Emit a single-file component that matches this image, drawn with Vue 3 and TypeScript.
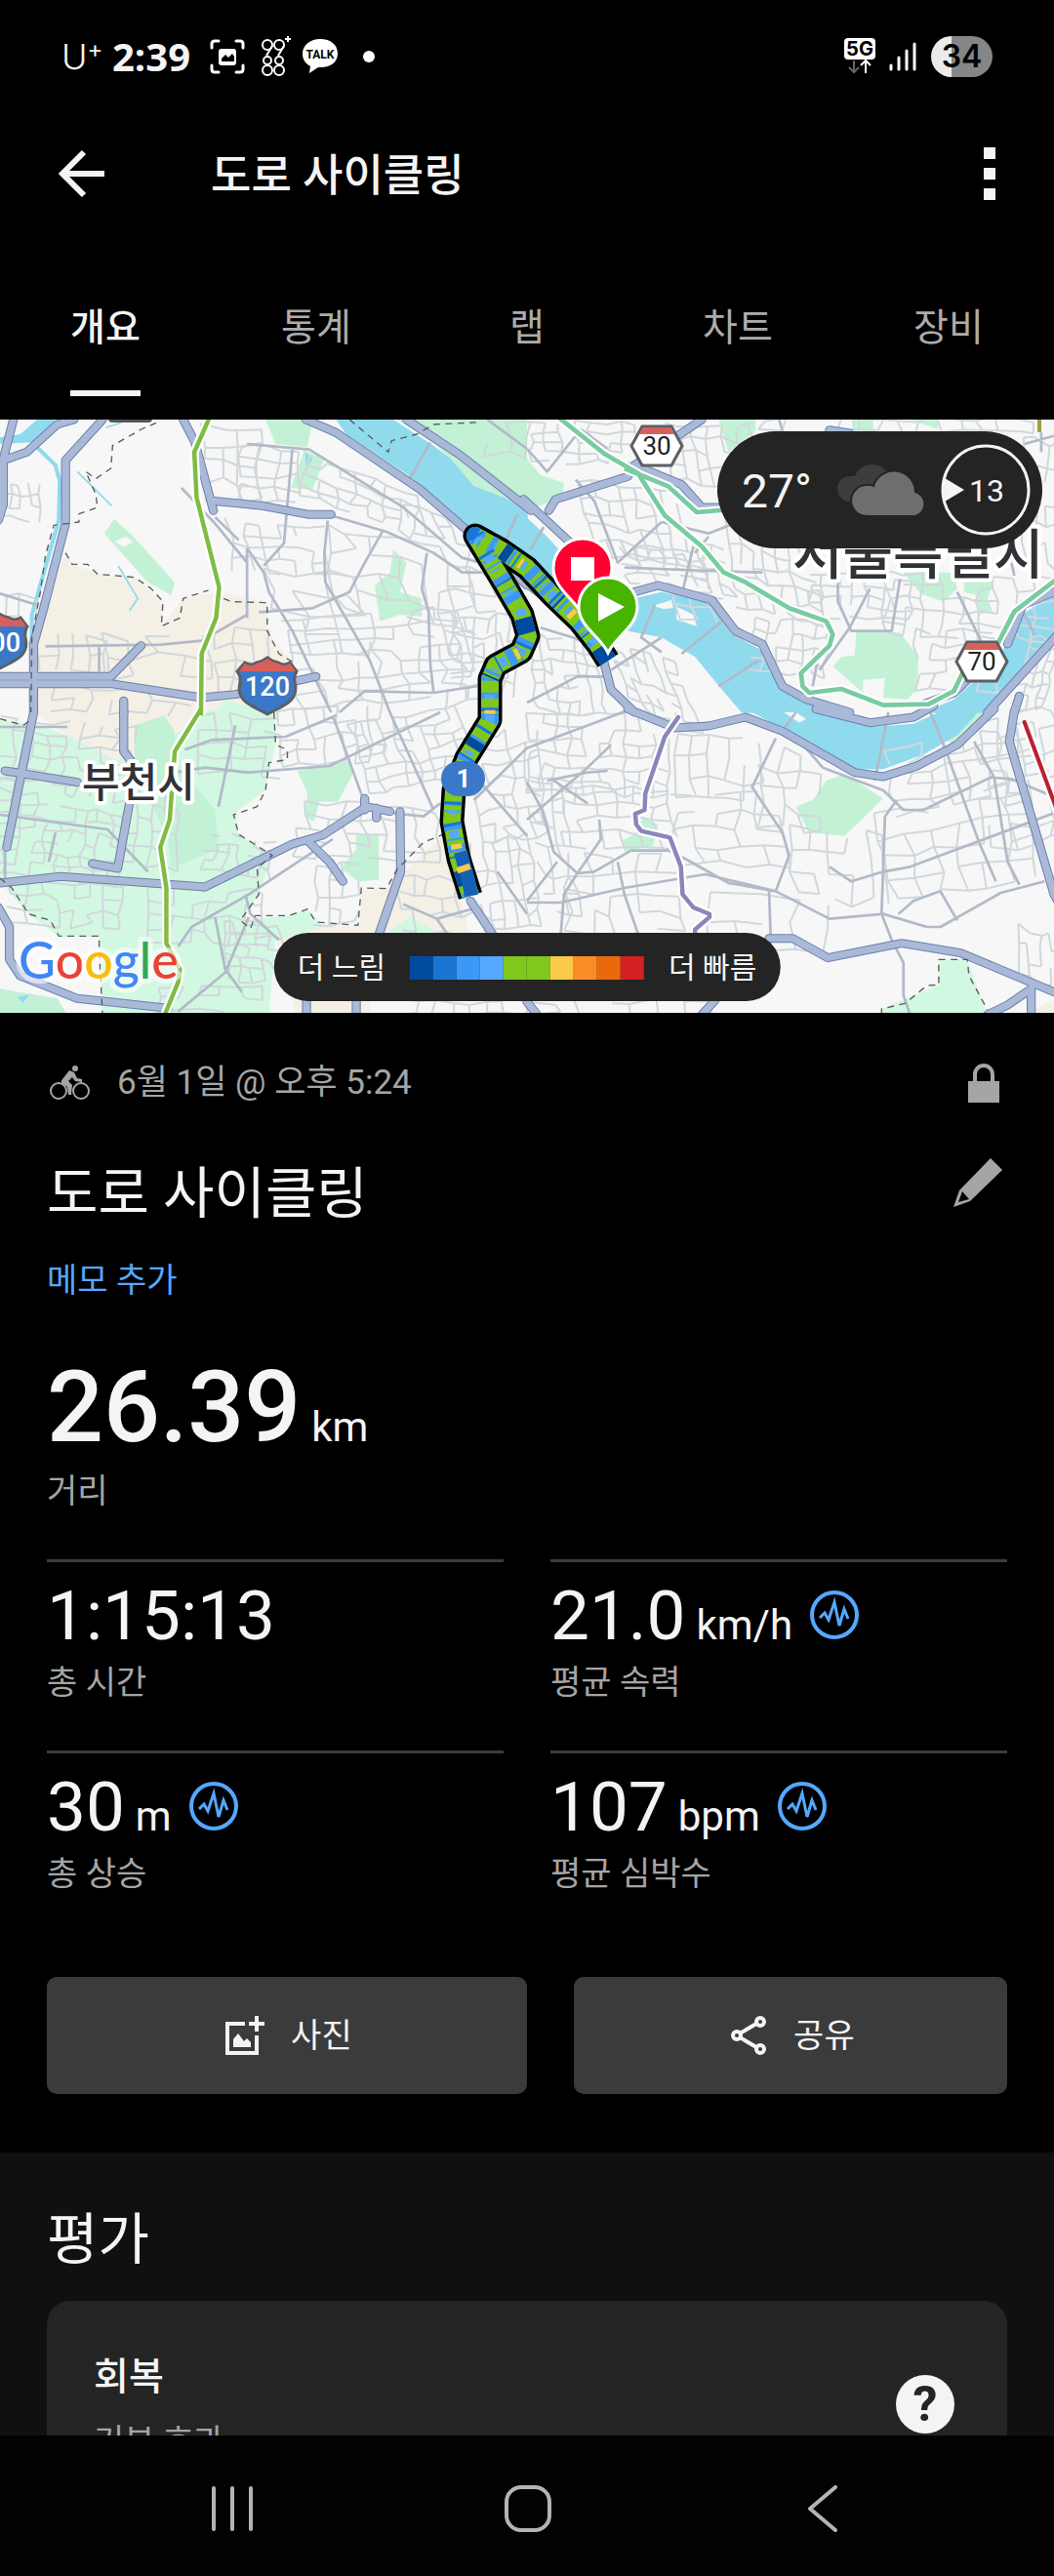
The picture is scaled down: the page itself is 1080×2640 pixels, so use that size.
<script setup lang="ts">
import { ref } from 'vue'

interface Metric {
  value: string
  unit?: string
  label: string
  chart?: boolean
}

interface Layer {
  name: string
  paths: string[]
}

type Patch = [x: number, y: number, w: number, h: number, cols: number, rows: number, skewX: number, skewY: number]

const tabs = ['개요', '통계', '랩', '차트', '장비']
const activeTab = ref('개요')

const metrics: Metric[] = [
  { value: '1:15:13', label: '총 시간' },
  { value: '21.0', unit: 'km/h', label: '평균 속력', chart: true },
  { value: '30', unit: 'm', label: '총 상승', chart: true },
  { value: '107', unit: 'bpm', label: '평균 심박수', chart: true },
]

const speedScale = [
  '#004ba0', '#1976d2', '#3d98f5', '#55a8ff', '#80c81c',
  '#80c81c', '#facb4a', '#fa8c28', '#eb690d', '#d32020',
]

// The map is stored as four tiles, each in its own coordinate space.
const tiles = [
  'translate(0 -10) scale(.3444 .3333)',
  'translate(540 -10) scale(.3444 .3333)',
  'translate(0 300) scale(.3444 .3333)',
  'translate(540 300) scale(.3444 .3333)',
]

let seed = 17
function random(): number {
  seed = (seed * 16807) % 2147483647
  return seed / 2147483647
}

// Builds an irregular street mesh inside a slanted patch.
function streets([x, y, w, h, cols, rows, skewX, skewY]: Patch): string {
  const nodes: number[][][] = []
  for (let r = 0; r <= rows; r++) {
    nodes.push([])
    for (let c = 0; c <= cols; c++) {
      const u = c / cols
      const v = r / rows
      nodes[r].push([
        Math.round(x + u * w + v * skewX + (random() - 0.5) * (w / cols) * 0.5),
        Math.round(y + v * h + u * skewY + (random() - 0.5) * (h / rows) * 0.5),
      ])
    }
  }
  let d = ''
  for (let r = 0; r <= rows; r++) {
    for (let c = 0; c <= cols; c++) {
      const [px, py] = nodes[r][c]
      if (c < cols && random() < 0.74) d += `M${px} ${py}L${nodes[r][c + 1].join(' ')}`
      if (r < rows && random() < 0.74) d += `M${px} ${py}L${nodes[r + 1][c].join(' ')}`
    }
  }
  return d
}

const patches: Patch[][] = [
  [
    [610, 50, 160, 220, 3, 4, 0, 10], [720, 110, 160, 170, 3, 4, 0, 10], [920, 140, 330, 120, 7, 4, -20, 130],
    [680, 340, 280, 150, 6, 4, 20, 20], [970, 360, 420, 260, 6, 4, 40, 60], [780, 500, 250, 250, 3, 4, 80, 10],
    [840, 640, 500, 270, 8, 7, 60, -30], [1280, 480, 180, 330, 3, 5, 60, 20], [1350, 650, 200, 260, 6, 6, -20, -30],
    [110, 690, 200, 110, 4, 2, 10, 10], [150, 850, 420, 70, 7, 2, 0, 20], [300, 700, 300, 120, 4, 2, 20, 0],
    [640, 670, 160, 220, 3, 4, 0, 0], [0, 220, 120, 110, 4, 3, 0, 10], [1200, 280, 180, 90, 4, 2, 30, 60],
    [1450, 40, 118, 100, 2, 2, 0, 0], [10, 580, 90, 60, 2, 1, 0, 0],
  ],
  [
    [0, 40, 320, 120, 7, 4, 20, 0], [150, 220, 280, 230, 7, 5, 60, 30], [280, 420, 240, 110, 6, 4, 20, 20],
    [400, 40, 260, 180, 6, 4, 30, 10], [580, 320, 260, 280, 7, 6, 40, 60], [420, 400, 160, 150, 4, 4, 40, 30],
    [700, 30, 820, 40, 14, 1, 0, 0], [840, 500, 300, 130, 7, 4, 0, 20], [1070, 500, 490, 190, 9, 5, 0, 20],
    [1160, 680, 230, 180, 5, 4, 0, 0], [680, 640, 220, 160, 6, 4, -20, 20], [0, 690, 200, 230, 6, 6, 30, 20],
    [240, 700, 200, 220, 6, 6, 80, 80], [430, 560, 150, 80, 3, 2, 30, 20], [1500, 700, 90, 220, 4, 6, -60, 0],
    [1480, 90, 100, 380, 3, 6, 0, 20],
  ],
  [
    [0, 20, 400, 180, 8, 5, -20, 30], [0, 200, 380, 290, 10, 8, -30, 40], [30, 520, 330, 130, 7, 3, 0, 10],
    [380, 220, 160, 240, 4, 5, -20, 20], [620, 370, 200, 110, 6, 4, -20, 30], [450, 540, 340, 170, 6, 4, 0, 10],
    [660, 640, 170, 180, 5, 5, 20, 20], [600, 0, 230, 180, 5, 4, 0, 20], [830, 0, 300, 170, 7, 4, 20, -30],
    [1040, 40, 320, 210, 8, 6, 60, -60], [860, 270, 430, 170, 8, 4, 20, 30], [1180, 500, 220, 160, 5, 3, 10, 20],
    [1390, 80, 200, 320, 5, 7, 40, -30], [1400, 400, 170, 280, 5, 6, 40, -20], [940, 470, 120, 180, 3, 4, 0, 0],
    [480, 840, 300, 80, 5, 2, 0, 0], [1180, 890, 380, 40, 7, 1, 0, 0],
  ],
  [
    [0, 0, 420, 240, 10, 6, 0, 20], [0, 200, 100, 400, 3, 8, 60, 20], [90, 230, 330, 180, 6, 4, 30, 10],
    [440, 70, 260, 190, 5, 3, 0, 20], [430, 240, 320, 220, 5, 4, 20, 20], [110, 440, 350, 230, 5, 4, 10, 10],
    [700, 110, 170, 240, 3, 4, 0, 20], [780, 360, 280, 210, 5, 3, 20, 20], [1060, 120, 440, 200, 8, 5, 50, -90],
    [1050, 320, 430, 260, 6, 4, 40, -80], [1330, 30, 240, 400, 4, 6, 60, -50], [540, 560, 350, 160, 4, 2, 0, 20],
    [1460, 660, 130, 150, 4, 3, 0, 30], [0, 890, 560, 40, 7, 1, 0, 0],
  ],
]

const majorRoads = [
  'M40 30L10 150V290L-5 340M10 155L80 130 170 45 220 30M305 30L195 155V350L130 610 100 720V930M545 30L580 100 635 310M630 280L780 295 920 322H985M910 30L1000 70 1250 245 1400 380 1568 540M1210 30L1370 140 1580 310M0 820H330L420 725M0 842H330L600 885 700 875 940 820M368 895V935',
  'M-10 275L120 400 200 480M520 30L320 170 300 205 85 275 65 310M320 170L460 230 520 300H580M320 560L390 540 550 585 620 680 700 720 760 850 830 890 960 930M0 535L210 700 250 860 320 930M1568 560L1475 600 1430 720M1580 690L1370 930M900 62L960 72M1465 880L1450 930M1400 740L1270 870 1180 905',
  'M100 0L20 415M15 180L230 215M368 -5V120L390 150 385 280 350 480 275 465M0 525L180 505 610 537 870 405 960 378 1090 290 1160 305M1085 265V300M1120 325V295M920 400L980 460 1020 520M1190 305L1192 490 1125 690M-5 600L28 660V760L60 810 230 880 500 910M1400 580L1470 690M912 885V930M1060 885V930',
  'M300 -10L440 48 540 42 650 15 760 58 975 185 1060 198 1160 165 1280 100 1390 -10M860 -10L1020 32 1150 15 1210 -20M1450 -5L1435 90 1568 560 1590 600M720 695H790L895 755 1115 710 1290 740 1580 865M1500 850L1430 900 1370 930M1500 850V930M0 890L30 930M560 885L520 930',
]

const borders = [
  'M465 40L420 60 335 110 330 180 285 212 255 190 285 260 290 300 235 320V345L160 355 135 450 120 560 95 700 92 930M195 440L215 475H260L290 505 400 515 450 550 485 590 480 665 535 640 545 580 620 555M665 580L690 590 795 593V680L830 750 870 775M1040 30L1155 130 1165 95 1240 75 1290 45 1430 38',
  '',
  'M815 0L820 100 855 115V145L800 155 790 240 765 290 695 315 710 375 810 440 765 480 770 560 715 640 745 665 760 625H860L915 605 940 645 1065 655 1075 540 1150 542 1180 485 1260 400 1320 375M0 20L70 40 95 20M0 510L35 540 85 620 150 640 175 688H295V730L305 930',
  'M1055 930V912L1125 895 1190 840 1225 838V760H1310L1315 810 1370 915',
]

const lineWest = [
  'M625 20L578 130 585 270 652 545 643 640 600 750 598 940',
  '',
  'M598 -10L520 120 505 330 477 415 495 540V710L535 790 530 830 490 930',
  '',
]

const lineNorth = [
  '',
  'M90 20L230 135 330 195 410 325 520 420 585 500 650 530 780 610 890 650 910 690 900 725 815 810 820 850 840 870 935 858 1060 908 1195 905 1270 865 1300 800 1400 720 1450 620 1575 522M290 180L420 235 505 315 620 305',
  '',
  '',
]

const lineSouth = ['', '', '', 'M450 15L410 75 352 250 350 300 322 312 325 345 340 365 425 385 458 475 463 560 495 600 543 620V630L500 668V720']
const lineEast = ['', '', '', 'M1480 30L1580 310']

const layers: Layer[] = [
  {
    name: 'tan',
    paths: [
      'M195 440L215 475 290 505 400 515 485 590 480 665 545 580 650 560 795 593V680L870 775 830 935H100V700Z',
      '',
      'M100 0H600L400 150 330 140 200 70ZM1075 545L1150 542 1320 375 1400 690H1070ZM820 690L965 655 1100 660V930H880Z',
      'M1470 930L1568 885V930Z',
    ],
  },
  {
    name: 'mint',
    paths: [
      'M640 935L670 890 800 930V935Z',
      '',
      'M0 25L100 35 200 70 330 140 400 150 620 -5H815L820 100 790 240 700 310 710 375 810 440 770 560 715 640 860 625 915 605 965 660 820 700 800 930H305L295 690H175L85 620 0 520ZM1150 680L1220 630 1330 690Z',
      'M1055 930V912L1225 838V760H1310L1370 930Z',
    ],
  },
  {
    name: 'park',
    paths: [
      'M340 335L395 388 520 530 510 570 440 530 310 380ZM790 30H930L915 115 820 105ZM905 125L965 150 930 245 865 240ZM1170 430L1210 470 1190 560 1255 580V635L1190 630 1130 650 1115 540 1160 500ZM1180 30L1300 110 1410 235 1568 310V30Z',
      'M0 150L40 200 110 225 105 270 0 310ZM570 30H680V66L600 130ZM965 30H1030V66H970ZM1140 30H1222V60ZM980 680L1110 685 1165 760 1160 860 1130 890 1060 885 1065 825 1000 830V870L910 790 935 760 975 755ZM1120 500H1270L1280 550 1240 590 1170 565ZM1300 530L1390 525 1370 580 1385 620 1340 630V570L1300 560Z',
      'M400 40L490 10 520 60V150L640 300 650 420 510 480 500 400 400 150ZM885 180L1040 150 1050 190 1005 275H950L935 335 905 320 915 250ZM1060 375H1127V515L1065 520 1015 480 1060 420ZM0 850L170 880 200 930H0Z',
      'M890 210L945 190 1060 265 945 380 840 370 800 290 850 270ZM345 325L390 345 375 410 290 430 280 395 320 375ZM1240 75L1350 0H1390L1270 105Z',
    ],
  },
  {
    name: 'water',
    paths: [
      'M1000 30H1170L1290 110 1340 150 1410 235 1500 270 1570 310V540L1400 375 1220 205 1030 75ZM908 130L930 150 912 185ZM0 85L60 75 110 30H165L100 100 0 105Z',
      'M-2 330L60 390 130 470 320 580 400 560 540 590 610 690 700 740 750 860 900 932H640L580 860 500 760 400 700 300 680 170 690 -2 510ZM1568 570L1470 630 1400 770 1270 890 1180 932H1365L1568 700Z',
      'M52 875L88 868 68 893Z',
      'M665 -2L760 50 980 175H1060L1180 130 1280 70 1345 -2H1230L1150 35 1020 45 880 -2Z',
    ],
  },
  { name: 'islet', paths: ['M340 405L375 390 395 405 370 422Z', 'M375 602L430 585 435 610 405 612ZM445 605L495 630 505 665 445 645Z', '', 'M765 0H800L830 20 810 32Z'] },
  { name: 'creek', paths: ['M110 115L165 170 178 220 175 340 150 430 95 630 92 900', '', '', ''] },
  { name: 'brook', paths: ['M230 190L332 295M352 480L410 580 385 618M315 55L360 40', '', '', ''] },
  { name: 'minor', paths: patches.map((list) => list.map(streets).join('')) },
  {
    name: 'mid',
    paths: [
      'M0 565L110 600M735 105L920 122 1200 300 1375 455 1430 470M640 330L710 400M540 240L640 350 735 470M735 425V640M735 425L785 500 800 560 870 680 985 930M985 325L1150 375 1290 440 1375 500H1435M975 340L965 440 968 530 1100 770 1160 930M870 120L855 290 845 410 785 480M1140 370L1080 480 1040 560 930 610 770 622M1270 440L1255 550 1275 620 1280 780 1290 870M1010 930L1085 865 1290 870 1420 850M135 727L480 722 600 710 735 630M295 730V805M1280 100L1220 210M1540 320L1500 410M1450 30L1568 120',
      'M0 120L60 190 160 60M145 215L200 280 270 470 400 345M160 60L240 120M400 345L540 380 640 340M495 420L460 570M540 390L500 440M290 485L540 495 590 490M540 495L700 500M750 30L760 66M925 430V590L965 680H1085L1110 520M1430 420L1450 510M1280 560L1350 710M1020 550L960 670 870 800M1568 80L1480 105M1530 70V130M570 850L690 770M580 650L460 750M1470 610L1510 690M380 600L340 700 400 745M40 670L200 720M0 900L150 820H240M250 800L400 700M870 740L850 850M50 360L10 430',
      'M0 315L320 360 440 490M0 45H200M550 115L630 85 850 75 1000 10M490 190L610 170 740 185 980 165 1050 130 1310 0M990 10L1080 265M1160 0L1290 300M530 720L570 660 740 560 930 430 990 390M730 560L745 620 830 700M640 630L670 790 720 860M530 920L670 800 740 630M1200 590L1300 635 1330 680M1300 635L1420 600M1170 310L1260 320 1310 280M1410 270L1568 110M1400 180L1568 380M1480 490L1568 620M15 410V510M700 40L650 290M165 370L145 460',
      'M0 110L310 -10M0 215L45 300 80 430 150 495 200 490 310 425H420L470 450 600 525 740 550 900 635 1060 620 1190 660H1230L1410 555 1540 520M150 495L110 560 100 690M0 585H100L290 540 530 498 740 550M270 460L290 560 330 680M740 550L780 440 760 370 670 230 740 80M720 545L725 690M830 110L880 170 1060 240 1120 300H1180L1380 200 1440 205 1568 260M1100 270L1065 320 1055 620 1085 700 1120 770V870L1140 930M1060 490L1140 475 1568 310M1330 90L1390 200 1430 460 1465 530M1240 100L1345 400 1395 520M900 475L965 520 1060 490M1105 620L1150 580 1230 550 1280 640M1075 0L1035 210M800 0L765 50M1200 0L1240 100M150 495L220 390 215 330M60 210L180 185 240 180M0 330L180 170 250 100M80 210L180 280M0 580L90 460',
    ],
  },
  { name: 'major-edge', paths: majorRoads },
  { name: 'major', paths: majorRoads },
  { name: 'border', paths: borders },
  { name: 'rail-edge', paths: lineWest.map((d, i) => d + lineNorth[i] + lineSouth[i] + lineEast[i]) },
  { name: 'rail-west', paths: lineWest },
  { name: 'rail-north', paths: lineNorth },
  { name: 'rail-south', paths: lineSouth },
  { name: 'rail-east', paths: lineEast },
]

const ride = 'M623 247L612 230 594 207 566 180 540 152 514 134 487 119 516 167 535 200 541 222 534 238 508 252 502 266V308L478 347 465 380 463 412 470 450 482 488'
</script>

<template>
  <div class="screen">
    <header class="status">
      <div class="status-side">
        <span class="carrier">U<sup>+</sup></span>
        <span class="clock">2:39</span>
        <svg class="scan" width="36" height="36" viewBox="0 0 36 36" aria-hidden="true">
          <path d="M2 9V5Q2 2 5 2H9M27 2h4q3 0 3 3v4M34 27v4q0 3-3 3h-4M9 34H5q-3 0-3-3v-4" fill="none" stroke="#fff" stroke-width="3" stroke-linecap="round" />
          <rect x="9" y="10" width="18" height="17" rx="3" fill="#fff" />
          <path d="M12 23v-3l4-4 3 3 4-4 2 3v5Z" fill="#000" />
        </svg>
        <svg class="digits-icon" width="30" height="42" viewBox="0 0 30 42" aria-hidden="true">
          <g fill="none" stroke="#fff" stroke-width="2">
            <circle cx="6" cy="9" r="5" /><circle cx="18" cy="9" r="5" />
            <path d="M11 10L5 20M23 10l-6 10" />
            <circle cx="6" cy="25" r="4" /><circle cx="18" cy="25" r="4" />
            <circle cx="6" cy="35" r="5" /><circle cx="18" cy="35" r="5" />
            <path d="M27 0v6M24 3h6" />
          </g>
        </svg>
        <svg class="talk" width="38" height="36" viewBox="0 0 38 36" aria-hidden="true">
          <path d="M19 0C8 0 1 7 1 15c0 6 3 10 8 13L8 35l9-6c12 1 20-5 20-14S30 0 19 0Z" fill="#fff" />
          <text x="19" y="20" text-anchor="middle" class="talk-text">TALK</text>
        </svg>
        <span class="dot"></span>
      </div>
      <div class="status-side right">
        <svg width="34" height="38" viewBox="0 0 34 38" aria-hidden="true">
          <rect x="1" y="0" width="32" height="22" rx="4" fill="#fff" />
          <text x="17" y="18" text-anchor="middle" class="network">5G</text>
          <path d="M11 23v12M6 30l5 5 5-5" fill="none" stroke="#666" stroke-width="2" />
          <path d="M23 36V24M18 28l5-5 5 5" fill="none" stroke="#fff" stroke-width="2" />
        </svg>
        <svg width="28" height="30" viewBox="0 0 28 30" aria-hidden="true">
          <path d="M2 24v4M10 16v12M18 9v19M26 2v26" stroke="#fff" stroke-width="3" stroke-linecap="round" />
        </svg>
        <span class="battery">34</span>
      </div>
    </header>

    <div class="topbar">
      <button class="icon-button" type="button" aria-label="뒤로">
        <svg width="48" height="50" viewBox="0 0 48 50">
          <path d="M47 25H4M26 3L4 25l22 22" fill="none" stroke="#f4f4f4" stroke-width="6" />
        </svg>
      </button>
      <h1>도로 사이클링</h1>
      <button class="icon-button" type="button" aria-label="더보기">
        <svg width="12" height="54" viewBox="0 0 12 54" fill="#f4f4f4">
          <path d="M0 0h12v12H0zM0 21h12v12H0zM0 42h12v12H0z" />
        </svg>
      </button>
    </div>

    <nav class="tabs">
      <button
        v-for="tab in tabs"
        :key="tab"
        type="button"
        :class="['tab', { active: tab === activeTab }]"
        @click="activeTab = tab"
      >
        <span>{{ tab }}</span>
      </button>
    </nav>

    <main class="content">
      <section class="map">
        <svg class="map-canvas" viewBox="0 0 1080 608">
          <rect width="1080" height="608" fill="#f7f7f7" />
          <g v-for="layer in layers" :key="layer.name" :class="['layer', layer.name]">
            <path v-for="(d, i) in layer.paths" :key="i" :d="d" :transform="tiles[i]" />
          </g>
          <path d="M1065 0V13" stroke="#a09c46" stroke-width="4" />
          <rect x="111" y="-8" width="45" height="11" rx="4" fill="#555" />

          <g class="place">
            <text x="84" y="387" class="city">부천시</text>
            <text x="812" y="158" class="capital">서울특별시</text>
          </g>

          <g class="ride">
            <path :d="ride" stroke="#000" stroke-width="25" />
            <path :d="ride" stroke="#80c81c" stroke-width="18" />
            <path :d="ride" stroke="#3d98f5" stroke-width="18" stroke-dasharray="3 5 2 12 6 9 2 4 8 21" />
            <path :d="ride" stroke="#55a8ff" stroke-width="10" stroke-dasharray="4 17 7 9 2 25" />
            <path :d="ride" stroke="#1976d2" stroke-width="18" stroke-dasharray="3 31 2 47 3 19" />
            <path :d="ride" stroke="#004ba0" stroke-width="18" stroke-dasharray="16 62 2 68 9 130" />
            <path :d="ride" stroke="#facb4a" stroke-width="11" stroke-dasharray="0 58 5 70 3 190 4 70 4 85" />
            <path d="M472 443l4 15 4 14 3 16" stroke="#1460b4" stroke-width="14" />
            <path d="M474 457l2 6" stroke="#facb4a" stroke-width="14" />
          </g>

          <g stroke="#5d5f62" stroke-width="3">
            <g id="shield">
              <path d="M251 249q7 4 12 0q6-1 11-5q5 4 11 5q6 4 12 0l7 9q-3 5-2 11c5 20-12 24-28 33c-16-9-33-13-28-33q1-6-3-11Z" fill="#3b78c8" />
              <path d="M251 250q7 4 12 0q6-1 11-5q5 4 11 5q6 4 12 0l6 8H245Z" fill="#d85f5c" stroke="none" />
            </g>
            <use href="#shield" x="-276" y="-46" />
            <g id="hex">
              <path d="M658 7h30l11 20-11 20h-30l-11-20Z" fill="#fff" />
              <path d="M659 8h28l4 7h-36Z" fill="#d85f5c" stroke="none" />
            </g>
            <use href="#hex" x="333" y="221" />
          </g>
          <g class="route-numbers" text-anchor="middle">
            <text x="274" y="283">120</text>
            <text x="-2" y="238">100</text>
            <text x="673" y="36" class="dark">30</text>
            <text x="1006" y="257" class="dark">70</text>
          </g>

          <rect x="452" y="350" width="45" height="36" rx="18" fill="#3b78c8" />
          <text x="475" y="377" text-anchor="middle" class="lap">1</text>

          <g stroke="#fff" stroke-width="3">
            <path d="M597 201C590 184 567 174 567 152a30 30 0 0 1 60 0C627 174 604 184 597 201Z" fill="#ff0031" />
            <path d="M585 141h24v24h-24Z" fill="#fff" stroke="none" />
            <path d="M623 239C615 222 593 212 593 192a30 30 0 0 1 60 0C653 212 631 222 623 239Z" fill="#48b400" />
            <path d="M613 178l27 14-27 15Z" fill="#fff" stroke="none" />
          </g>

          <text x="19" y="573" class="brand">
            <tspan fill="#4285f4">G</tspan><tspan fill="#ea4335">o</tspan><tspan fill="#fbbc05">o</tspan><tspan fill="#4285f4">g</tspan><tspan fill="#34a853">l</tspan><tspan fill="#ea4335">e</tspan>
          </text>
        </svg>

        <div class="weather">
          <span class="temperature">27°</span>
          <svg width="94" height="52" viewBox="0 0 94 52" aria-hidden="true">
            <path d="M14 38a13 13 0 0 1 2-26h4a19 19 0 0 1 36 2v24Z" fill="#3d3d3d" />
            <path d="M32 53a16 16 0 0 1 0-32q4-1 7 1a22 22 0 0 1 43 6a13 13 0 0 1 0 25Z" fill="#6e6e6e" stroke="#242424" stroke-width="2" />
          </svg>
          <span class="wind">
            <svg width="92" height="94" viewBox="0 0 92 94" aria-hidden="true">
              <ellipse cx="46" cy="47" rx="44" ry="45" fill="none" stroke="#f4f4f4" stroke-width="3" />
              <path d="M4 35l20 12L4 59q-2-12 0-24Z" fill="#f4f4f4" />
              <text x="47" y="59" text-anchor="middle" class="wind-speed">13</text>
            </svg>
          </span>
        </div>

        <div class="legend">
          <span>더 느림</span>
          <span class="scale">
            <i v-for="(color, i) in speedScale" :key="i" :style="{ background: color }"></i>
          </span>
          <span>더 빠름</span>
        </div>
      </section>

      <section class="summary">
        <div class="date-row">
          <svg width="42" height="36" viewBox="0 0 42 36" aria-hidden="true">
            <g fill="none" stroke="#a5a5a5" stroke-width="2">
              <circle cx="9" cy="26" r="8" /><circle cx="32" cy="26" r="8" />
            </g>
            <circle cx="26" cy="3" r="3" fill="#a5a5a5" />
            <path d="M20 5l5 2 3 6 5 1v3l-7-1-3-4-4 4 4 4-1 10h-3l-1-8-6-4q-1-2 1-4Z" fill="#a5a5a5" />
          </svg>
          <time>6월 1일 @ 오후 5:24</time>
          <svg class="lock" width="32" height="40" viewBox="0 0 32 40" aria-hidden="true">
            <path d="M0 18h32v22H0Z" fill="#a5a5a5" />
            <path d="M7 19V11a9 9 0 0 1 18 0v8" fill="none" stroke="#a5a5a5" stroke-width="4" />
          </svg>
        </div>

        <div class="title-row">
          <h2>도로 사이클링</h2>
          <button class="icon-button edit" type="button" aria-label="편집">
            <svg width="50" height="50" viewBox="0 0 50 50">
              <path d="M38 0L50 12 17 44 0 50 6 33Z" fill="#a5a5a5" />
              <path d="M9 34l7 8-11 3Z" fill="#000" />
            </svg>
          </button>
        </div>
        <a class="memo" href="#">메모 추가</a>

        <div class="distance">
          <p><strong>26.39</strong><span class="unit">km</span></p>
          <span class="label">거리</span>
        </div>

        <div class="metrics">
          <div v-for="metric in metrics" :key="metric.label" class="metric">
            <div class="metric-value">
              <span class="figure">{{ metric.value }}<span v-if="metric.unit" class="unit">{{ metric.unit }}</span></span>
              <svg v-if="metric.chart" width="50" height="50" viewBox="0 0 50 50" aria-hidden="true">
                <circle cx="25" cy="25" r="23" fill="none" stroke="#55a8ff" stroke-width="4" />
                <path d="M10 28l5-5 4 7 6-18 5 24 5-17 4 10" fill="none" stroke="#55a8ff" stroke-width="3" />
              </svg>
            </div>
            <span class="label">{{ metric.label }}</span>
          </div>
        </div>

        <div class="actions">
          <button class="action photo" type="button">
            <svg width="40" height="40" viewBox="0 0 40 40" aria-hidden="true">
              <path d="M20 8H2v30h30V20" fill="none" stroke="#f4f4f4" stroke-width="4" />
              <path d="M32 0v16M24 8h16" stroke="#f4f4f4" stroke-width="4" />
              <path d="M8 32v-8l5-6 6 8 3-3 4 4v5Z" fill="#f4f4f4" />
            </svg>
            사진
          </button>
          <button class="action share" type="button">
            <svg width="38" height="40" viewBox="0 0 38 40" aria-hidden="true">
              <g fill="none" stroke="#f4f4f4" stroke-width="4">
                <circle cx="7" cy="20" r="4" /><circle cx="31" cy="6" r="4" /><circle cx="31" cy="34" r="4" />
                <path d="M10 18L27 8M10 22l17 10" />
              </g>
            </svg>
            공유
          </button>
        </div>
      </section>

      <section class="evaluation">
        <h2>평가</h2>
        <article class="card">
          <div>
            <h3>회복</h3>
            <p class="benefit">기본 효과</p>
          </div>
          <button class="help" type="button" aria-label="도움말">?</button>
        </article>
      </section>
    </main>

    <footer class="system-nav">
      <button type="button" aria-label="최근 앱">
        <svg width="44" height="48" viewBox="0 0 44 48">
          <path d="M3 3v42M22 3v42M41 3v42" stroke="#b4b4b4" stroke-width="4" stroke-linecap="round" />
        </svg>
      </button>
      <button type="button" aria-label="홈">
        <svg width="48" height="48" viewBox="0 0 48 48">
          <rect x="2" y="2" width="44" height="44" rx="15" fill="none" stroke="#b4b4b4" stroke-width="4" />
        </svg>
      </button>
      <button type="button" aria-label="뒤로 가기">
        <svg width="32" height="48" viewBox="0 0 32 48">
          <path d="M29 2L3 24l26 22" fill="none" stroke="#b4b4b4" stroke-width="4" stroke-linecap="round" stroke-linejoin="round" />
        </svg>
      </button>
    </footer>
  </div>
</template>

<style>
body {
  margin: 0;
  background: #000;
}
</style>

<style scoped>
.screen {
  display: flex;
  flex-direction: column;
  height: 100vh;
  overflow: hidden;
  background: #000;
  color: #f4f4f4;
  font-family: Roboto, "Noto Sans CJK KR", sans-serif;
}

h1,
h2,
h3,
p {
  margin: 0;
}

svg {
  display: block;
  flex: none;
}

button {
  margin: 0;
  padding: 0;
  border: 0;
  background: none;
  color: inherit;
  font: inherit;
}

.status {
  flex: none;
  display: flex;
  justify-content: space-between;
  height: 116px;
  padding: 0 63px;
}

.status-side {
  display: flex;
  align-items: center;
}

.status-side.right {
  gap: 13px;
}

.carrier {
  width: 42px;
  font: 300 36px/42px Inter, sans-serif;
}

.carrier sup {
  font-size: 24px;
  font-weight: 400;
  line-height: 0;
  vertical-align: 12px;
}

.clock {
  margin-left: 10px;
  font: 700 40px/42px "Open Sans", sans-serif;
}

.scan {
  margin-left: 20px;
}

.digits-icon {
  margin-left: 17px;
}

.talk {
  margin-left: 11px;
}

.talk-text {
  font: 700 12px Roboto, sans-serif;
}

.dot {
  width: 12px;
  height: 12px;
  margin-left: 25px;
  border-radius: 50%;
  background: #fff;
}

.network {
  font: 700 20px Inter, sans-serif;
}

.battery {
  width: 63px;
  height: 42px;
  margin-left: 2px;
  border-radius: 21px;
  background: linear-gradient(90deg, #ebebeb 34%, #868686 34%);
  color: #000;
  font: 600 32px/42px Inter, sans-serif;
  text-align: center;
}

.topbar {
  flex: none;
  display: flex;
  align-items: center;
  height: 124px;
  padding: 0 60px;
}

.topbar h1 {
  flex: 1;
  margin-left: 108px;
  padding-top: 6px;
  font-size: 45px;
  font-weight: 500;
  line-height: 64px;
}

.tabs {
  flex: none;
  display: grid;
  grid-template-columns: repeat(5, 1fr);
  height: 190px;
}

.tab {
  display: flex;
  justify-content: center;
  align-items: flex-start;
  padding-top: 72px;
  color: #acacac;
  font-size: 39px;
  line-height: 48px;
}

.tab span {
  padding-bottom: 40px;
  border-bottom: 6px solid transparent;
}

.tab.active {
  color: #f4f4f4;
  font-weight: 500;
}

.tab.active span {
  border-color: #f4f4f4;
}

.content {
  flex: 1;
  min-height: 0;
  overflow: hidden;
}

.map {
  position: relative;
}

.map-canvas {
  width: 100%;
  height: auto;
}

.layer path {
  fill: none;
  stroke-linejoin: round;
}

.tan path { fill: #f4f0e5; }
.mint path { fill: #d2f8e2; }
.park path { fill: #c3f1d5; }
.water path { fill: #90daee; }
.islet path { fill: #f7f7f7; }
.creek path { stroke: #90daee; stroke-width: 12; }
.brook path { stroke: #90daee; stroke-width: 5; }
.minor path { stroke: #d1d8dc; stroke-width: 6; }
.mid path { stroke: #b2bac8; stroke-width: 8; }
.major-edge path { stroke: #6c81ad; stroke-width: 27; stroke-linecap: round; }
.major path { stroke: #a9b9d7; stroke-width: 21; stroke-linecap: round; }
.border path { stroke: #5a5d5f; stroke-width: 4; stroke-dasharray: 20 16; }
.rail-edge path { stroke: #fff; stroke-width: 27; }
.rail-west path { stroke: #7fbc42; stroke-width: 13; }
.rail-north path { stroke: #79cba1; stroke-width: 14; }
.rail-south path { stroke: #8b86ba; stroke-width: 13; stroke-linecap: round; }
.rail-east path { stroke: #b82131; stroke-width: 12; stroke-linecap: round; }

.place {
  fill: #303236;
  stroke: #fff;
  stroke-width: 8;
  stroke-linejoin: round;
  paint-order: stroke;
}

.city {
  font-size: 42px;
  font-weight: 500;
}

.capital {
  font-size: 56px;
  font-weight: 500;
}

.ride path {
  fill: none;
  stroke-linejoin: round;
}

.route-numbers {
  fill: #fff;
  font-size: 27px;
  font-weight: 500;
}

.route-numbers .dark {
  fill: #222;
  font-size: 26px;
  font-weight: 400;
}

.lap {
  fill: #fff;
  font-size: 25px;
  font-weight: 700;
}

.brand {
  font: 500 52px Lato, sans-serif;
  stroke: rgba(255, 255, 255, .6);
  stroke-width: 10;
  stroke-linejoin: round;
  paint-order: stroke;
}

.weather {
  position: absolute;
  top: 12px;
  right: 12px;
  display: flex;
  align-items: center;
  height: 120px;
  padding: 0 12px 0 25px;
  border-radius: 60px;
  background: #242424;
}

.temperature {
  margin-right: 24px;
  padding-top: 4px;
  font-size: 48px;
  line-height: 56px;
}

.wind {
  margin-left: 14px;
}

.wind-speed {
  fill: #f4f4f4;
  font-size: 32px;
}

.legend {
  position: absolute;
  bottom: 12px;
  left: 50%;
  display: flex;
  align-items: center;
  gap: 25px;
  height: 70px;
  padding: 0 24px;
  border-radius: 35px;
  background: #242424;
  transform: translateX(-50%);
  font-size: 30px;
  line-height: 40px;
  white-space: nowrap;
}

.legend > span {
  padding-top: 2px;
}

.scale {
  display: flex;
}

.scale i {
  width: 24px;
  height: 24px;
}

.summary {
  padding: 36px 48px 60px;
}

.date-row {
  display: flex;
  align-items: center;
  height: 72px;
  padding: 0 8px 0 3px;
  color: #a5a5a5;
  font-size: 35px;
  line-height: 48px;
}

.date-row time {
  flex: 1;
  margin-left: 27px;
}

.title-row {
  display: flex;
  align-items: center;
  justify-content: space-between;
  height: 84px;
  margin-top: 36px;
  padding-right: 5px;
}

.title-row h2,
.evaluation h2 {
  font-size: 57px;
  font-weight: 400;
  line-height: 84px;
}

.edit {
  padding-bottom: 24px;
}

.memo {
  display: block;
  width: max-content;
  margin-top: 22px;
  color: #55a8ff;
  font-size: 34px;
  line-height: 48px;
  text-decoration: none;
}

.distance {
  margin-top: 54px;
}

.distance p {
  height: 104px;
  font-size: 42px;
  line-height: 104px;
}

.distance strong {
  font-size: 102px;
  font-weight: 500;
}

.unit {
  margin-left: 11px;
  font-size: 42px;
  line-height: 42px;
}

.label {
  display: block;
  color: #a5a5a5;
  font-size: 34px;
  line-height: 48px;
}

.distance .label {
  margin-top: 10px;
}

.metrics {
  display: grid;
  grid-template-columns: 1fr 1fr;
  gap: 46px 48px;
  margin-top: 46px;
}

.metric {
  border-top: 3px solid #3c3c3c;
  padding-top: 18px;
}

.metric-value {
  display: flex;
  align-items: center;
  gap: 18px;
  height: 72px;
}

.figure {
  padding-top: 2px;
  font-size: 71px;
  line-height: 72px;
}

.metric .label {
  margin-top: 9px;
}

.actions {
  display: flex;
  gap: 48px;
  margin-top: 82px;
}

.action {
  display: flex;
  align-items: center;
  justify-content: center;
  gap: 27px;
  height: 120px;
  padding-left: 4px;
  border-radius: 10px;
  background: #3b3b3b;
  font-size: 34px;
  line-height: 48px;
}

.photo {
  flex: 41;
}

.share {
  flex: 37;
}

.evaluation {
  padding: 48px 48px 0;
  background: #101010;
}

.card {
  display: flex;
  align-items: flex-start;
  justify-content: space-between;
  height: 240px;
  margin-top: 20px;
  padding: 50px 54px 48px 48px;
  border-radius: 24px;
  background: #242424;
}

.card h3 {
  font-size: 39px;
  font-weight: 500;
  line-height: 56px;
}

.benefit {
  margin-top: 14px;
  color: #a5a5a5;
  font-size: 34px;
  line-height: 48px;
}

.help {
  width: 60px;
  height: 60px;
  margin-top: 26px;
  border-radius: 50%;
  background: #f4f4f4;
  color: #242424;
  font-size: 50px;
  font-weight: 700;
  line-height: 60px;
}

.system-nav {
  flex: none;
  display: flex;
  align-items: center;
  justify-content: space-between;
  height: 144px;
  padding: 6px 197px 0 198px;
  box-sizing: border-box;
  background: #020202;
}

.system-nav button {
  display: flex;
  justify-content: center;
  width: 80px;
}
</style>
